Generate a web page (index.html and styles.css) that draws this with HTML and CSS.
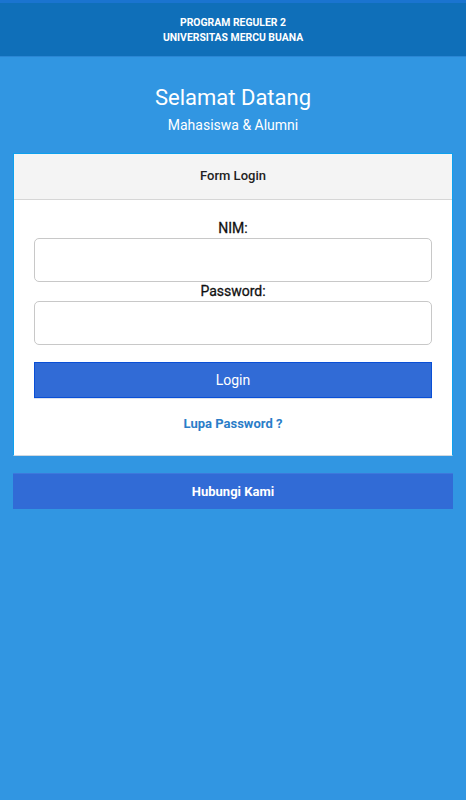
FILE: index.html
```html
<!DOCTYPE html>
<html lang="en">
<head>
  <meta charset="UTF-8">
  <meta name="viewport" content="width=device-width, initial-scale=1.0">
  <title>Login Mahasiswa</title>
  <link rel="stylesheet" href="styles.css">
</head>
<body>

  <div class="topbar"></div>
  <header class="header">
    <p>PROGRAM REGULER 2</p>
    <p>UNIVERSITAS MERCU BUANA</p>
  </header>

  <div class="welcome">
    <h1>Selamat Datang</h1>
    <h2>Mahasiswa &amp; Alumni</h2>
  </div>

  <div class="card">
    <div class="card-header">Form Login</div>
    <form class="card-body" onsubmit="return false;">
      <label for="nim">NIM:</label>
      <input type="text" id="nim" class="input">
      <label for="password">Password:</label>
      <input type="password" id="password" class="input">
      <button type="submit" class="btn btn-login">Login</button>
      <a href="#" class="forgot">Lupa Password ?</a>
    </form>
  </div>

  <a href="#" class="btn btn-contact">Hubungi Kami</a>

</body>
</html>
```

FILE: styles.css
```css
* {
  margin: 0;
  padding: 0;
  box-sizing: border-box;
}
body {
  font-family: Roboto, "Liberation Sans", Arial, sans-serif;
  background-color: #3196e2;
  min-height: 800px;
}
.topbar {
  height: 3px;
  background-color: #1a74d0;
}
.header {
  height: 54px;
  background-color: #0f6fb9;
  border-bottom: 1px solid #2a86d4;
  color: white;
  text-align: center;
  font-size: 10.4px;
  font-weight: bold;
  line-height: 15px;
  padding-top: 12px;
}
.welcome {
  text-align: center;
  color: white;
  padding-top: 27px;
}
.welcome h1 {
  font-size: 22px;
  font-weight: normal;
  line-height: 28px;
}
.welcome h2 {
  font-size: 14px;
  font-weight: normal;
  line-height: 20px;
  margin-top: 3px;
}
.card {
  margin: 18px 13px 0;
  background-color: white;
  border: 1px solid #0ea0ee;
  border-bottom-color: #cfd8e0;
}
.card-header {
  background-color: #f4f4f4;
  border-bottom: 1px solid #d6d6d6;
  height: 46px;
  line-height: 44px;
  text-align: center;
  font-size: 13px;
  font-weight: 500;
  color: #222;
}
.card-body {
  display: flex;
  flex-direction: column;
  align-items: center;
  padding: 19px 20px 22px;
}
.card-body label {
  font-size: 14px;
  font-weight: normal;
  -webkit-text-stroke: 0.3px #111;
  color: #111;
  line-height: 18px;
  margin-bottom: 1px;
}
.input {
  width: 100%;
  height: 44px;
  border: 1px solid #c8c8c8;
  border-radius: 5px;
  background-color: white;
  padding: 0 10px;
  font-size: 14px;
}
.btn {
  display: block;
  background-color: #316bd6;
  color: white;
  text-align: center;
  text-decoration: none;
  cursor: pointer;
}
.btn-login {
  width: 100%;
  height: 36px;
  margin-top: 17px;
  border: 1px solid #0a4fd6;
  box-shadow: 0 1px 0 #dce3ee;
  font-family: inherit;
  font-size: 14px;
}
.forgot {
  margin-top: 17px;
  font-size: 13px;
  font-weight: bold;
  color: #2a7dc8;
  text-decoration: none;
  line-height: 18px;
}
.btn-contact {
  margin: 17px 13px 0;
  height: 36px;
  line-height: 36px;
  font-size: 13px;
  font-weight: bold;
  border-top: 1px solid #3d78dc;
}
```
